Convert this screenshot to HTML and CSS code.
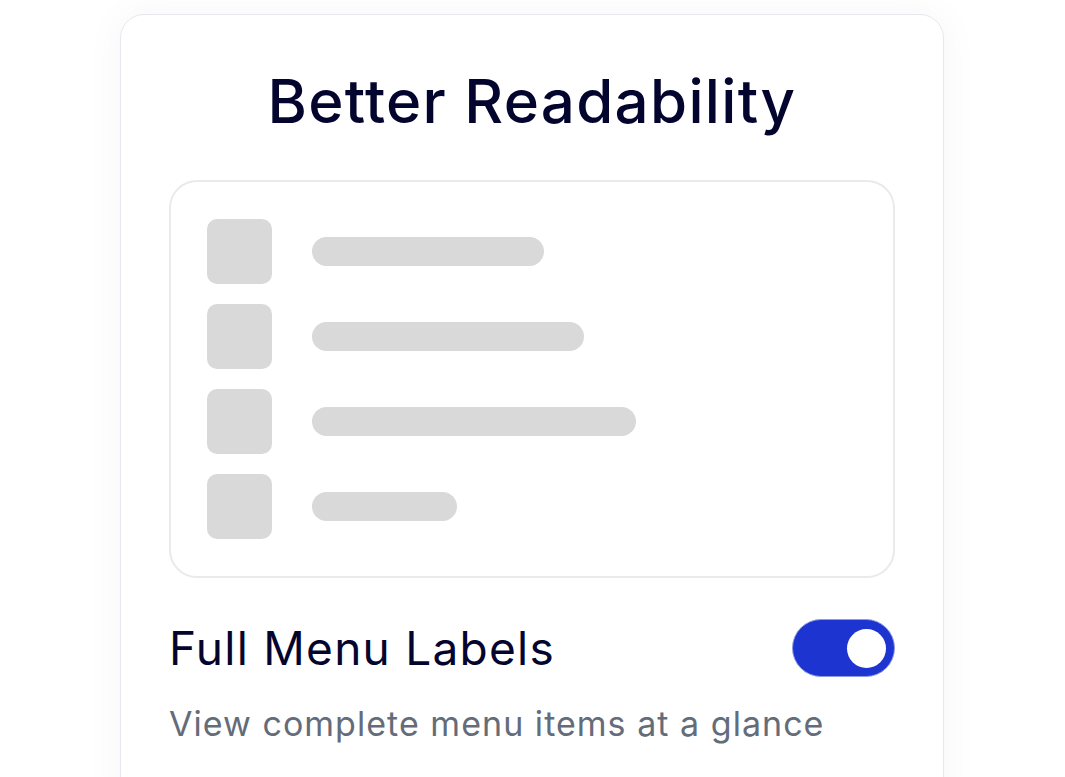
FILE: index.html
```html
<!DOCTYPE html>
<html lang="en">
<head>
<meta charset="utf-8">
<title>Better Readability</title>
<link rel="stylesheet" href="styles.css">
</head>
<body>
<main class="page">
  <section class="card">
    <h1 class="card-title">Better Readability</h1>
    <div class="preview">
      <div class="preview-row"><span class="preview-icon"></span><span class="preview-bar" style="width:232px"></span></div>
      <div class="preview-row"><span class="preview-icon"></span><span class="preview-bar" style="width:272px"></span></div>
      <div class="preview-row"><span class="preview-icon"></span><span class="preview-bar" style="width:324px"></span></div>
      <div class="preview-row"><span class="preview-icon"></span><span class="preview-bar" style="width:145px"></span></div>
    </div>
    <div class="setting">
      <span class="setting-label">Full Menu Labels</span>
      <span class="toggle is-on" role="switch" aria-checked="true"><span class="toggle-knob"></span></span>
    </div>
    <p class="setting-desc">View complete menu items at a glance</p>
  </section>
</main>
</body>
</html>
```
FILE: styles.css
```css
* { box-sizing: border-box; }
html, body { margin: 0; padding: 0; background: #ffffff; }
body {
  font-family: Inter, "Noto Sans", "Liberation Sans", sans-serif;
  overflow: hidden;
  height: 777px;
}
.page {
  padding: 14px 0 0 120px;
}
.card {
  width: 824px;
  min-height: 800px;
  background: #ffffff;
  border: 1px solid #e8e8ee;
  border-radius: 24px;
  box-shadow: 0 0 40px rgba(20, 20, 40, 0.045);
  padding: 50px 48px 0;
}
.card-title {
  margin: 0 0 43px;
  text-align: center;
  font-size: 60px;
  line-height: 72px;
  font-weight: 500;
  color: #04052e;
  letter-spacing: 1.3px;
}
.preview {
  border: 2px solid #e9e9ee;
  border-radius: 28px;
  padding: 37px 36px;
  display: flex;
  flex-direction: column;
  gap: 20px;
}
.preview-row {
  display: flex;
  align-items: center;
  gap: 40px;
}
.preview-icon {
  width: 65px;
  height: 65px;
  border-radius: 10px;
  background: #d9d9d9;
  flex: none;
}
.preview-bar {
  height: 29px;
  border-radius: 15px;
  background: #d9d9d9;
}
.setting {
  margin-top: 41px;
  display: flex;
  align-items: center;
  justify-content: space-between;
}
.setting-label {
  font-size: 46px;
  line-height: 58px;
  color: #04052e;
  font-weight: 400;
  letter-spacing: 1.25px;
}
.toggle {
  width: 103px;
  height: 58px;
  border-radius: 29px;
  background: #1e34d0;
  border: 1px solid #8e9be2;
  display: flex;
  align-items: center;
  justify-content: flex-end;
  padding-right: 8px;
}
.toggle-knob {
  width: 39px;
  height: 39px;
  border-radius: 50%;
  background: #ffffff;
}
.setting-desc {
  margin: 25px 0 0;
  font-size: 34px;
  line-height: 44px;
  color: #646c7a;
  letter-spacing: 1.03px;
}
```
